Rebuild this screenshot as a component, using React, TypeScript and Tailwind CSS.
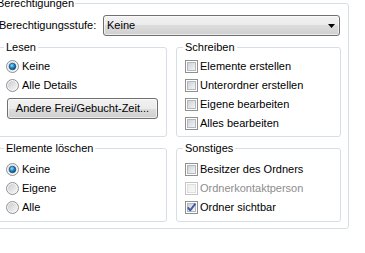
import React from "react";

function Radio({ checked }: { checked?: boolean }) {
  return (
    <svg width="13" height="13" viewBox="0 0 13 13" className="shrink-0">
      <defs>
        <linearGradient id="rbg" x1="0" y1="0" x2="1" y2="1">
          <stop offset="0" stopColor="#c9ccd1" />
          <stop offset="1" stopColor="#f7f7f7" />
        </linearGradient>
        <radialGradient id="rsel" cx="0.4" cy="0.35" r="0.7">
          <stop offset="0" stopColor="#8fe0ff" />
          <stop offset="0.55" stopColor="#1b7fc4" />
          <stop offset="1" stopColor="#0a3d70" />
        </radialGradient>
      </defs>
      <circle cx="6.5" cy="6.5" r="6" fill="#f4f4f4" stroke="#8e8f8f" strokeWidth="1" />
      <circle cx="6.5" cy="6.5" r="4.5" fill="url(#rbg)" />
      {checked && <circle cx="6.5" cy="6.5" r="3.3" fill="url(#rsel)" stroke="#0f3f6e" strokeWidth="0.6" />}
    </svg>
  );
}

function Check({ checked, disabled }: { checked?: boolean; disabled?: boolean }) {
  return (
    <svg width="13" height="13" viewBox="0 0 13 13" className="shrink-0">
      <defs>
        <linearGradient id="cbg" x1="0" y1="0" x2="1" y2="1">
          <stop offset="0" stopColor="#cbcfd5" />
          <stop offset="1" stopColor="#f7f7f7" />
        </linearGradient>
        <linearGradient id="cbgd" x1="0" y1="0" x2="1" y2="1">
          <stop offset="0" stopColor="#ececec" />
          <stop offset="1" stopColor="#f8f8f8" />
        </linearGradient>
      </defs>
      <rect x="0.5" y="0.5" width="12" height="12" fill="#ffffff" stroke={disabled ? "#c4c4c4" : "#8e8f8f"} />
      <rect
        x="2.5"
        y="2.5"
        width="8"
        height="8"
        fill={disabled ? "url(#cbgd)" : "url(#cbg)"}
        stroke={disabled ? "#dedede" : "#b3b8bf"}
      />
      {checked && (
        <path d="M2.8 6.4 L5.2 9.4 L10.4 2.6" fill="none" stroke="#3b5aa3" strokeWidth="1.8" strokeLinejoin="round" />
      )}
    </svg>
  );
}

function RadioRow({ label, checked }: { label: string; checked?: boolean }) {
  return (
    <div className="flex h-[19px] items-center gap-[3px]">
      <Radio checked={checked} />
      <span>{label}</span>
    </div>
  );
}

function CheckRow({ label, checked, disabled }: { label: string; checked?: boolean; disabled?: boolean }) {
  return (
    <div className="flex h-[19px] items-center gap-[2px]">
      <Check checked={checked} disabled={disabled} />
      <span className={disabled ? "text-[#8d8d8d]" : ""}>{label}</span>
    </div>
  );
}

export default function App() {
  return (
    <div className="h-[253px] w-[365px] overflow-hidden bg-white text-[11px] leading-[13px] text-black font-['Liberation_Sans',Arial,sans-serif]">
      <fieldset className="-ml-[11px] -mt-[3px] w-[360px] rounded-[3px] border border-[#d5dfe5] pb-[6px] pl-[7px] pr-[7px]">
        <legend className="-ml-[1px] px-[1px] leading-[13px]">Berechtigungen</legend>
        <div className="mt-[5px] flex h-[21px] items-center">
          <span className="ml-[2px]">Berechtigungsstufe:</span>
          <div className="ml-auto mr-[1px] flex h-[21px] w-[237px] items-center rounded-[3px] border border-[#707070] bg-[linear-gradient(to_bottom,#f2f2f2_0%,#ebebeb_50%,#dddddd_50%,#cfcfcf_100%)] pl-[3px] pr-[4px] shadow-[inset_0_0_0_1px_rgba(255,255,255,0.6)]">
            <span>Keine</span>
            <svg width="7" height="4" viewBox="0 0 7 4" className="ml-auto">
              <path d="M0 0 H7 L3.5 4 Z" fill="#000" />
            </svg>
          </div>
        </div>
        <div className="mt-[5px] grid grid-cols-[170px_165px] gap-x-[9px] gap-y-[5px]">
          <fieldset className="h-[96px] rounded-[3px] border border-[#d5dfe5] pl-[8px]">
            <legend className="-ml-[2px] px-[2px] leading-[13px]">Lesen</legend>
            <div className="mt-[3px] flex flex-col">
              <RadioRow label="Keine" checked />
              <RadioRow label="Alle Details" />
            </div>
            <button className="ml-[1px] mt-[3px] flex h-[21px] w-[151px] items-center justify-center rounded-[3px] border border-[#707070] bg-[linear-gradient(to_bottom,#f2f2f2_0%,#ebebeb_50%,#dddddd_50%,#cfcfcf_100%)] shadow-[inset_0_0_0_1px_rgba(255,255,255,0.6)]">
              Andere Frei/Gebucht-Zeit...
            </button>
          </fieldset>
          <fieldset className="h-[96px] rounded-[3px] border border-[#d5dfe5] pl-[8px]">
            <legend className="-ml-[2px] px-[2px] leading-[13px]">Schreiben</legend>
            <div className="mt-[3px] flex flex-col">
              <CheckRow label="Elemente erstellen" />
              <CheckRow label="Unterordner erstellen" />
              <CheckRow label="Eigene bearbeiten" />
              <CheckRow label="Alles bearbeiten" />
            </div>
          </fieldset>
          <fieldset className="h-[80px] rounded-[3px] border border-[#d5dfe5] pl-[8px]">
            <legend className="-ml-[2px] px-[2px] leading-[13px]">Elemente löschen</legend>
            <div className="mt-[5px] flex flex-col">
              <RadioRow label="Keine" checked />
              <RadioRow label="Eigene" />
              <RadioRow label="Alle" />
            </div>
          </fieldset>
          <fieldset className="h-[80px] rounded-[3px] border border-[#d5dfe5] pl-[8px]">
            <legend className="-ml-[2px] px-[2px] leading-[13px]">Sonstiges</legend>
            <div className="mt-[5px] flex flex-col">
              <CheckRow label="Besitzer des Ordners" />
              <CheckRow label="Ordnerkontaktperson" disabled />
              <CheckRow label="Ordner sichtbar" checked />
            </div>
          </fieldset>
        </div>
      </fieldset>
    </div>
  );
}
